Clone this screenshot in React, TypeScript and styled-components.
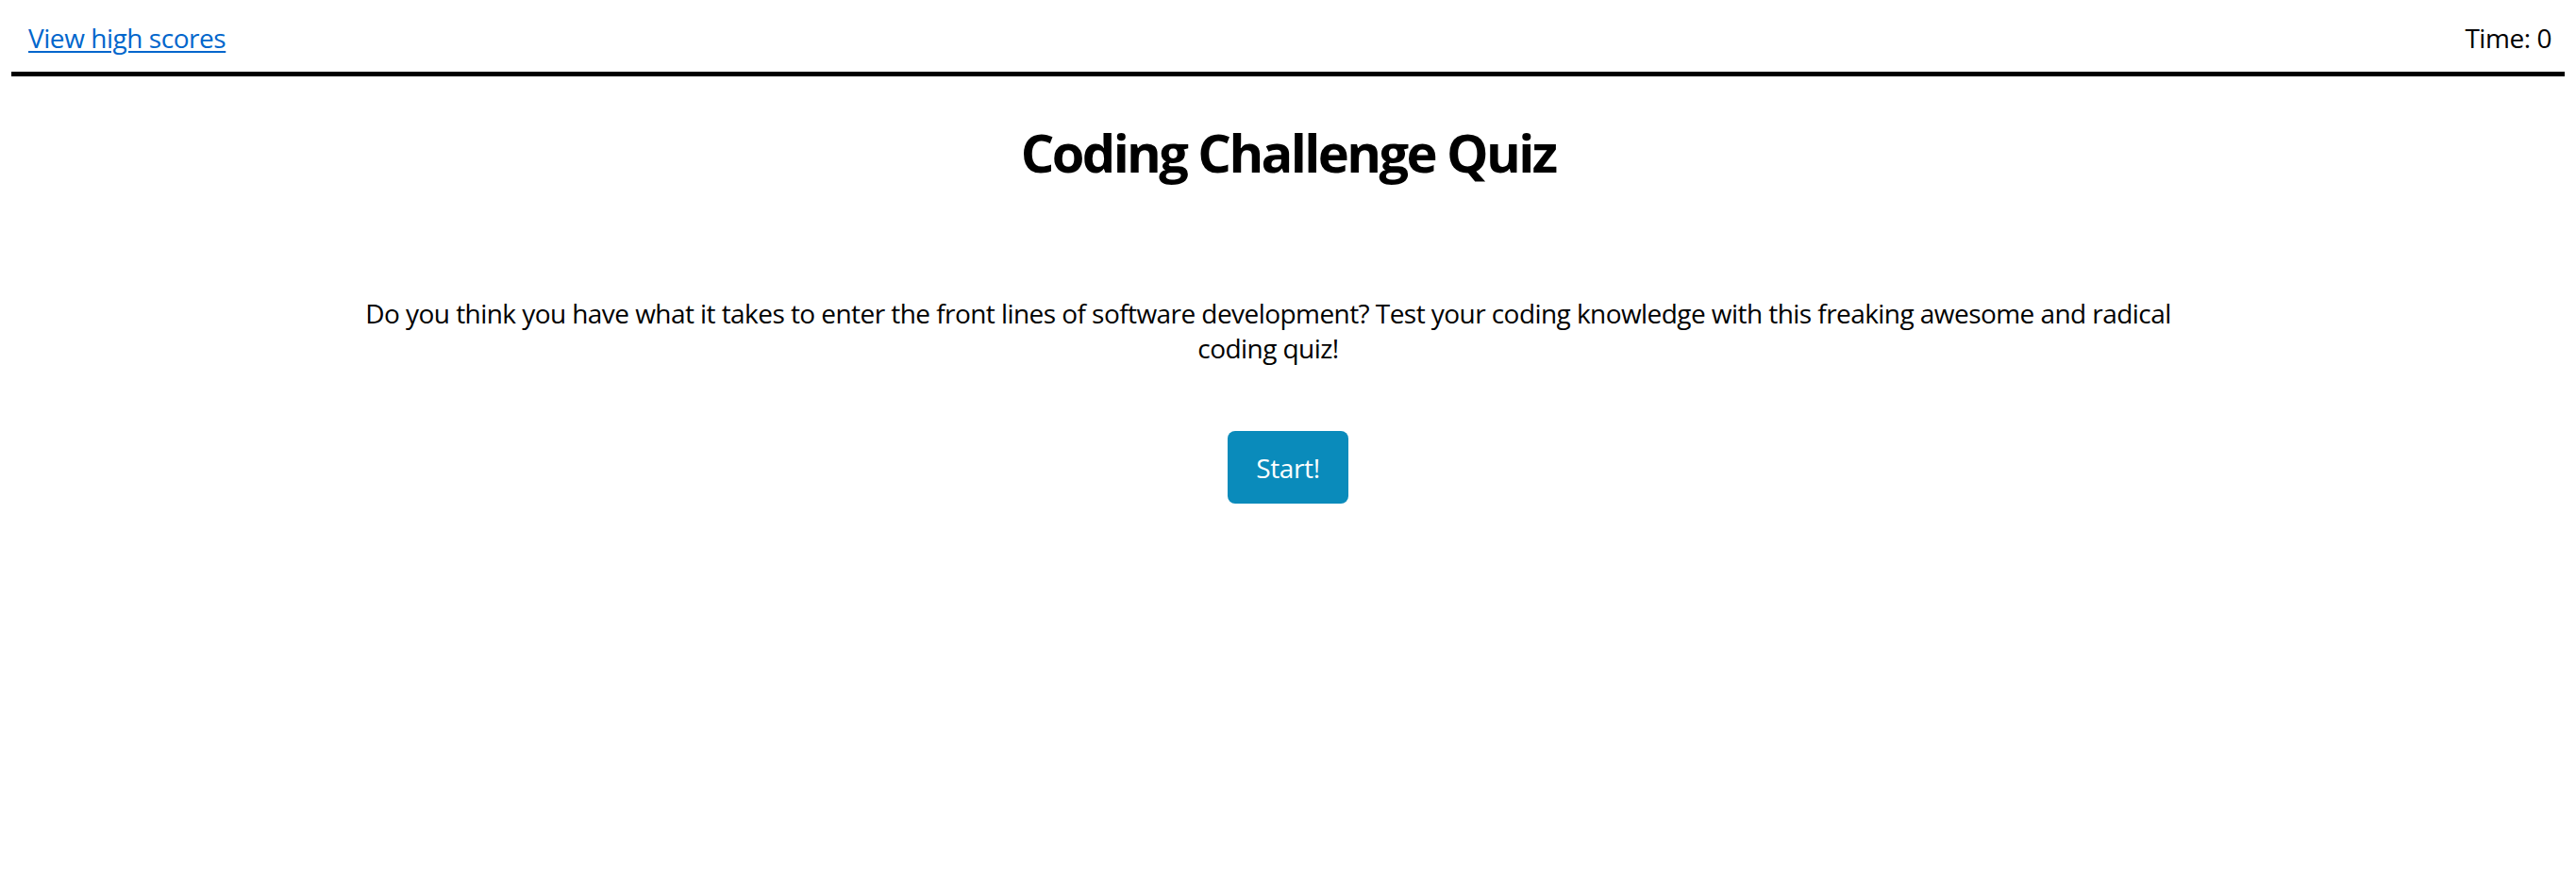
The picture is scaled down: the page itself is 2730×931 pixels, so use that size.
import React from "react";
import styled, { createGlobalStyle } from "styled-components";

const GlobalStyle = createGlobalStyle`
  html, body {
    margin: 0;
    padding: 0;
    background: #ffffff;
  }
  body {
    margin: 12px;
    font-family: "Open Sans", "Noto Sans", "Liberation Sans", sans-serif;
    color: #000000;
  }
`;

const Header = styled.header`
  display: flex;
  justify-content: space-between;
  align-items: center;
  padding: 10px 14px 17px 18px;
  border-bottom: 5px solid #000000;
  font-size: 28px;
  line-height: 37px;
  letter-spacing: -0.45px;
`;

const HighScoresLink = styled.a`
  color: #0066cc;
  text-decoration: underline;
  text-decoration-thickness: 2px;
  text-underline-offset: 3px;
  cursor: pointer;
`;

const Timer = styled.div`
  color: #000000;
`;

const Main = styled.main`
  display: flex;
  flex-direction: column;
  align-items: center;
  text-align: center;
`;

const Title = styled.h1`
  margin: 47px 0 0;
  font-size: 56px;
  line-height: 67px;
  font-weight: 700;
  letter-spacing: -2.6px;
`;

const Intro = styled.p`
  margin: 119px 0 0;
  width: 1960px;
  padding-right: 42px;
  font-size: 28px;
  line-height: 37px;
  letter-spacing: -0.56px;
`;

const StartButton = styled.button`
  margin-top: 69px;
  width: 128px;
  height: 77px;
  border: none;
  border-radius: 8px;
  background: #0a8bbb;
  color: #ffffff;
  font-family: inherit;
  font-size: 28px;
  letter-spacing: -0.4px;
  cursor: pointer;
`;

export default function App() {
  return (
    <>
      <GlobalStyle />
      <Header>
        <HighScoresLink href="#">View high scores</HighScoresLink>
        <Timer>Time: 0</Timer>
      </Header>
      <Main>
        <Title>Coding Challenge Quiz</Title>
        <Intro>
          Do you think you have what it takes to enter the front lines of software
          development? Test your coding knowledge with this freaking awesome and
          radical coding quiz!
        </Intro>
        <StartButton>Start!</StartButton>
      </Main>
    </>
  );
}
